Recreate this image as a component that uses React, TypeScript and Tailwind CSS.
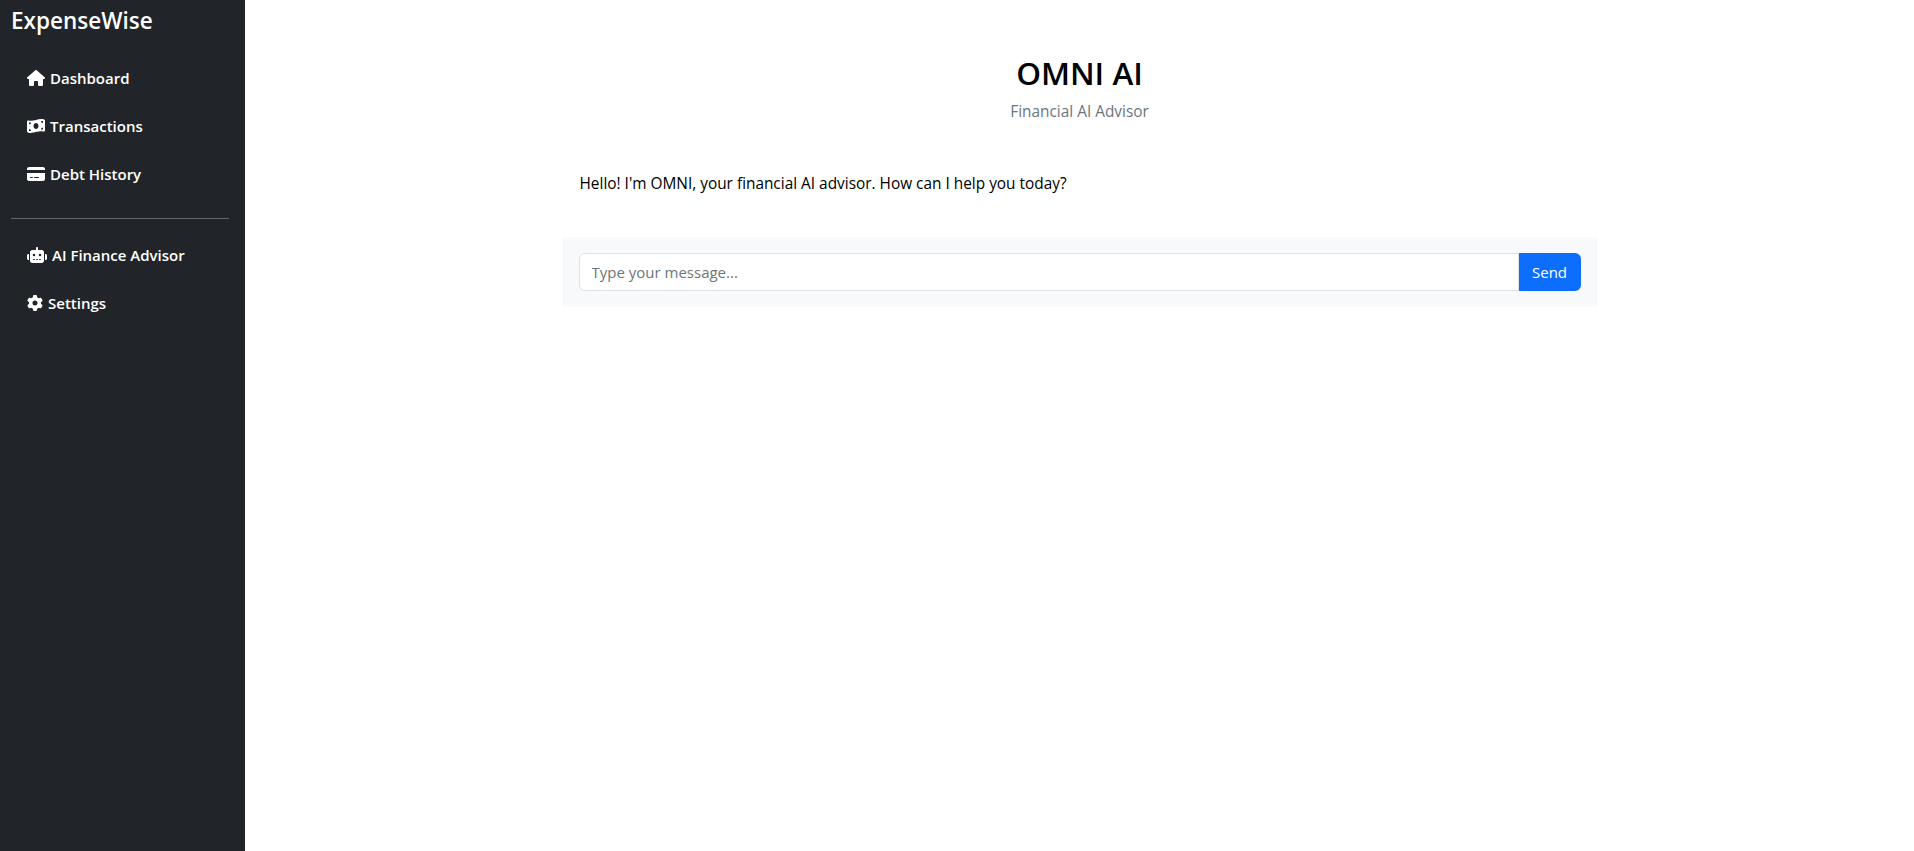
import { FaHouse, FaMoneyBillWave, FaCreditCard, FaRobot, FaGear } from "react-icons/fa6";

// Sidebar links, split by the divider
const TOP_NAV = [
  { icon: FaHouse, label: "Dashboard", w: "w-[18px]" },
  { icon: FaMoneyBillWave, label: "Transactions", w: "w-[18px]" },
  { icon: FaCreditCard, label: "Debt History", w: "w-[18px]" },
];

const BOTTOM_NAV = [
  { icon: FaRobot, label: "AI Finance Advisor", w: "w-[20px]" },
  { icon: FaGear, label: "Settings", w: "w-[16px]" },
];

function NavLink({ item }: { item: (typeof TOP_NAV)[number] }) {
  const Icon = item.icon;
  return (
    <a className="flex h-12 items-center gap-[5px] px-4 text-[15px] font-semibold text-white">
      <Icon className={`${item.w} h-4 shrink-0`} />
      <span>{item.label}</span>
    </a>
  );
}

export default function App() {
  return (
    <div className="flex h-[851px] overflow-hidden bg-white font-['Open_Sans','Liberation_Sans',sans-serif] text-base text-black">
      <aside className="flex w-[245px] shrink-0 flex-col bg-[#212529] pr-4 pl-[11px]">
        <h1 className="mt-[5px] h-[32px] text-[22.5px] leading-[32px] font-semibold text-white">ExpenseWise</h1>
        <nav className="mt-[17px]">
          {TOP_NAV.map((item) => (
            <NavLink key={item.label} item={item} />
          ))}
        </nav>
        <hr className="mt-5 mb-[12px] border-t border-[#63666a]" />
        <nav>
          {BOTTOM_NAV.map((item) => (
            <NavLink key={item.label} item={item} />
          ))}
        </nav>
      </aside>

      <main className="flex flex-1 flex-col items-center">
        <div className="w-[1034px]">
          <header className="pt-[52px] text-center">
            <h2 className="text-[31.5px] leading-[42px] font-semibold">OMNI AI</h2>
            <p className="mt-[6px] text-[15.4px] leading-6 text-[#6c757d]">Financial AI Advisor</p>
          </header>
          <p className="mt-[48px] pr-4 pl-[17px] text-[15.4px] leading-6">
            Hello! I'm OMNI, your financial AI advisor. How can I help you today?
          </p>
          <div className="mt-[41px] flex h-[70px] items-center bg-[#f8f9fa] px-4">
            <input
              className="h-[38px] flex-1 rounded-l-md border border-[#dee2e6] bg-white px-3 text-[15px] outline-none placeholder:text-[#6c757d]"
              placeholder="Type your message..."
            />
            <button className="h-[38px] w-[62px] rounded-r-md bg-[#0d6efd] text-[15px] text-white">Send</button>
          </div>
        </div>
      </main>
    </div>
  );
}
